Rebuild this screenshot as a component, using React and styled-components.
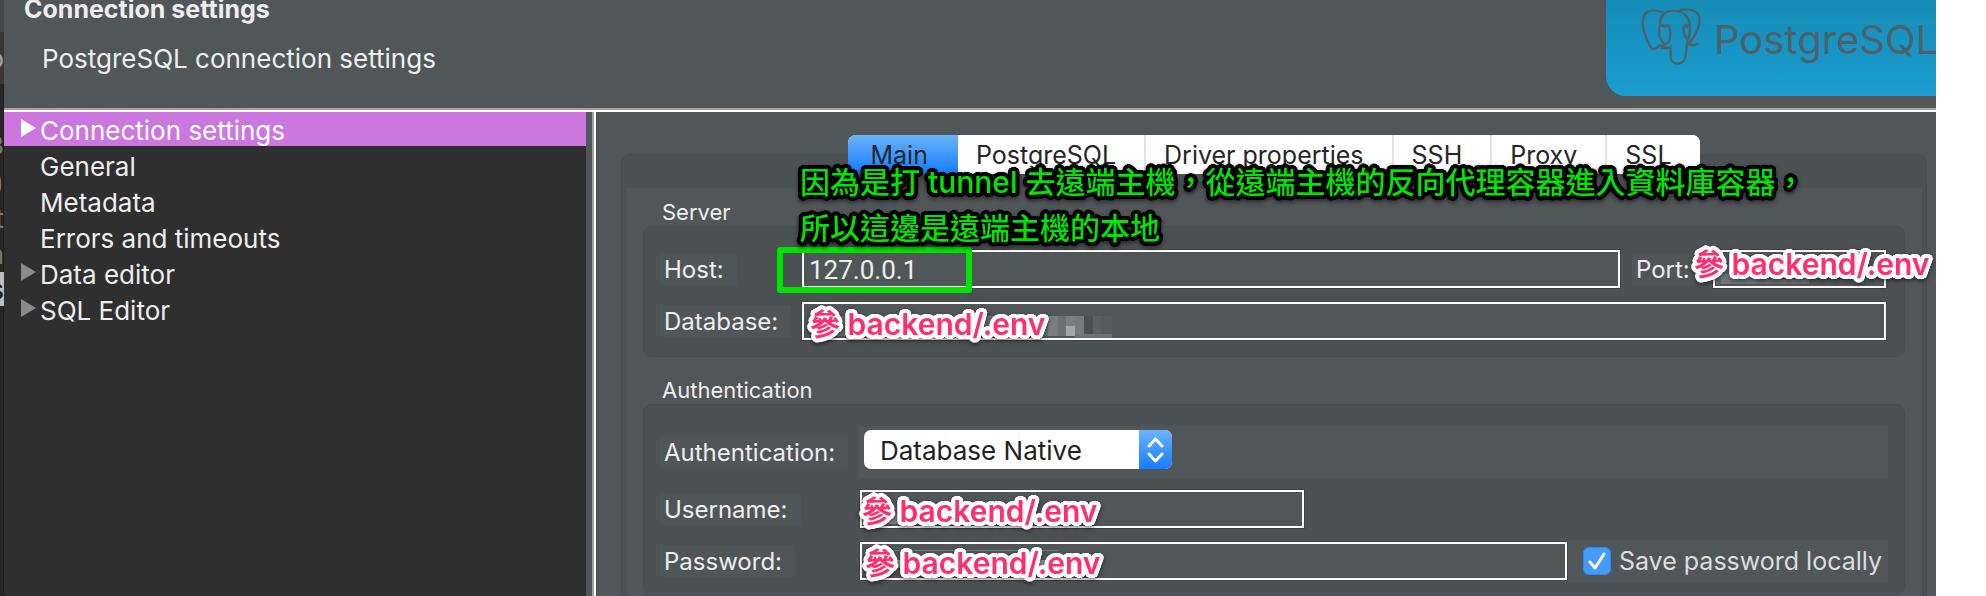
import React from 'react';
import styled, { createGlobalStyle, css } from 'styled-components';

const GlobalStyle = createGlobalStyle`
  *, *::before, *::after { box-sizing: border-box; }
  body { margin: 0; background: #fff; }
  button, input, select { font: inherit; color: inherit; margin: 0; }
`;

const Page = styled.div`
  display: flex;
  min-height: 100vh;
  padding-right: 50px;
  font-family: Inter, 'Noto Sans CJK TC', sans-serif;
  font-size: 26px;
  color: #eeeeee;
`;

/* Sliver of the window behind the dialog */
const Backdrop = styled.div`
  flex: 0 0 4px;
  width: 4px;
  background: #252525;
  box-shadow: inset -1px 0 0 #1c1c1c;
`;

const Sliver = styled.div`
  display: flex;
  align-items: center;
  justify-content: flex-end;
  height: ${p => p.$h}px;
  overflow: hidden;
  background: ${p => p.$bg || 'transparent'};
  color: ${p => p.$fg || '#777777'};
`;

const Dialog = styled.div`
  flex: 1;
  min-width: 0;
  display: flex;
  flex-direction: column;
  background: #515659;
`;

const Header = styled.header`
  display: flex;
  justify-content: space-between;
  height: 112px;
  border-bottom: 2px solid #ffffff;
  box-shadow: inset 0 -2px 0 #a3a3a1;
`;

const Heading = styled.div`
  padding-left: 20px;
`;

const Title = styled.h1`
  margin: 0 0 26px;
  font-size: 25px;
  line-height: 18px;
  font-weight: 700;
`;

const Subtitle = styled.p`
  margin: 0;
  padding-left: 18px;
  line-height: 30px;
`;

const Brand = styled.div`
  display: flex;
  width: 330px;
  height: 96px;
  overflow: hidden;
  border-bottom-left-radius: 20px;
  background: linear-gradient(#168cb6, #1a9dd1);
  color: #4c626b;
`;

const BrandMark = styled.svg`
  flex: none;
  width: 84px;
  height: 76px;
  margin-left: 24px;
  fill: none;
  stroke: currentColor;
  stroke-width: 7;
`;

const BrandName = styled.span`
  font-size: 40px;
  font-weight: 400;
  line-height: 80px;
`;

const Body = styled.div`
  flex: 1;
  display: flex;
`;

const Tree = styled.nav`
  flex: 0 0 582px;
  background: #2f2f2f;
`;

const TreeItem = styled.button`
  display: flex;
  width: 100%;
  height: 34px;
  margin-bottom: 2px;
  padding: 0 0 0 16px;
  border: 0;
  text-align: left;
  line-height: 38px;
  background: ${p => (p.$selected ? '#cb77df' : 'transparent')};
  color: ${p => (p.$selected ? '#ffffff' : '#eeeeee')};
`;

const Arrow = styled.svg`
  flex: none;
  width: 20px;
  height: 34px;
  fill: ${p => (p.$selected ? '#ffffff' : '#8b8b8b')};
`;

const Splitter = styled.div`
  flex: 0 0 10px;
  border-right: 2px solid #ffffff;
  box-shadow: inset -2px 0 0 #a0a0a0;
`;

const Pane = styled.main`
  flex: 1;
  min-width: 0;
  display: flex;
  flex-direction: column;
  padding: 23px 9px 0 25px;
`;

const TabBar = styled.div`
  z-index: 1;
  align-self: center;
  display: flex;
  height: 39px;
  margin-bottom: -20px;
  overflow: hidden;
  border-radius: 8px;
  background: #ffffff;
`;

const Tab = styled.button`
  padding: 0 28px 0 18px;
  border: 0;
  border-left: 2px solid #e3e3e3;
  font-size: 25px;
  color: #262626;
  background: #ffffff;
  ${p => p.$active && css`
    padding: 0 30px 0 22px;
    border-left: 0;
    background: linear-gradient(#6cb3fa, #147dff);
    & + button { border-left: 0; }
  `}
`;

const TabFrame = styled.div`
  flex: 1;
  padding: 33px 4px 0;
  border: 1px solid #494e51;
  border-bottom: 0;
  border-radius: 9px 9px 0 0;
  background: #4c5154;
`;

const TabPanel = styled.div`
  height: 100%;
  padding: 12px 17px 1px;
  background: #515659;
`;

const Group = styled.section`
  & + & { margin-top: 21px; }
`;

const GroupTitle = styled.h2`
  margin: 0 0 2px 19px;
  font-size: 22px;
  line-height: 24px;
  font-weight: 400;
`;

const GroupBox = styled.div`
  display: flex;
  flex-direction: column;
  gap: ${p => p.$gap}px;
  padding: ${p => p.$pad};
  border: 1px solid #484d50;
  border-radius: 9px;
  background: #4c5154;
`;

const Row = styled.div`
  display: flex;
  align-items: center;
`;

const LabelCell = styled.div`
  flex: 0 0 ${p => p.$w}px;
  padding-left: ${p => p.$inset || 0}px;
`;

const Label = styled.label`
  display: inline-block;
  padding: 2px 13px 0 4px;
  font-size: 24px;
  line-height: 30px;
  vertical-align: top;
  background: #505558;
`;

const Field = styled.div`
  position: relative;
  display: flex;
  padding: 1px;
  ${p => (p.$w ? `flex: 0 0 ${p.$w}px;` : 'flex: 1;')}
  min-width: 0;
  background: #3d4245;
`;

const TextInput = styled.input`
  width: 100%;
  height: 38px;
  padding: 2px 5px 0;
  border: 2px solid #ffffff;
  border-radius: 0;
  outline: 0;
  background: #515659;
  font-family: Roboto, sans-serif;
  font-weight: 400;
`;

const Strip = styled.div`
  flex: 1;
  display: flex;
  align-items: center;
  padding: ${p => p.$pad};
  background: #515659;
`;

const SelectWrap = styled.div`
  position: relative;
  width: 308px;
  height: 39px;
`;

const Select = styled.select`
  appearance: none;
  width: 100%;
  height: 100%;
  padding: 2px 40px 0 16px;
  border: 0;
  border-radius: 7px;
  background: #ffffff;
  color: #222222;
`;

const SelectCap = styled.svg`
  position: absolute;
  top: 0;
  right: 0;
  width: 33px;
  height: 39px;
  border-radius: 0 7px 7px 0;
  background: linear-gradient(#6cb3fa, #147dff);
  pointer-events: none;
`;

const Check = styled.label`
  display: flex;
  align-items: center;
  gap: 8px;
  padding: 0 6px 0 15px;
  font-size: 25px;
  line-height: 40px;
  white-space: nowrap;
  color: #dddddd;
`;

const CheckBox = styled.span`
  position: relative;
  display: flex;
  width: 28px;
  height: 28px;

  input {
    appearance: none;
    width: 28px;
    height: 28px;
    border: 1px solid #2f8af0;
    border-radius: 6px;
    background: #419cfb;
  }

  svg {
    position: absolute;
    inset: 0;
    pointer-events: none;
  }
`;

/* Round outline: copies of the text set in a circle round it */
const outline = (radius, color) =>
  Array.from({ length: 24 }, (_, i) => {
    const a = (i * Math.PI) / 12;
    return `${(Math.cos(a) * radius).toFixed(2)}px ${(Math.sin(a) * radius).toFixed(2)}px 0 ${color}`;
  }).join(', ');

/* Annotations drawn over the dialog */
const Note = styled.span`
  position: absolute;
  z-index: 3;
  top: ${p => p.$top}px;
  left: ${p => p.$left}px;
  font-size: 30px;
  font-weight: 600;
  line-height: 40px;
  white-space: nowrap;
  color: #ff2e6c;
  text-shadow: ${outline(4, '#ffffff')};
  filter: drop-shadow(0 2px 2px rgba(0, 0, 0, 0.5));
`;

const Remark = styled(Note)`
  font-weight: 500;
  line-height: 46px;
  color: #00e600;
  text-shadow: ${outline(4, '#000000')};
`;

const Highlight = styled.span`
  position: absolute;
  z-index: 2;
  top: -2px;
  left: -24px;
  width: 195px;
  height: 46px;
  border: 6px solid #00e400;
  border-radius: 3px;
  pointer-events: none;
`;

const Mosaic = styled.svg`
  position: absolute;
  top: 3px;
  left: 3px;
  width: 320px;
  height: 36px;
  pointer-events: none;
`;

const slivers = [
  { h: 32, bg: '#43484b' },
  { h: 52, bg: '#373737', t: 'o', fg: '#a5a5a5' },
  { h: 42 },
  { h: 38, t: '3' },
  { h: 36, t: ')' },
  { h: 36, t: 't' },
  { h: 36, t: 'a' },
  { h: 34, bg: '#bdbdbd', t: 's', fg: '#111111' },
];

const treeItems = [
  { text: 'Connection settings', arrow: true, selected: true },
  { text: 'General' },
  { text: 'Metadata' },
  { text: 'Errors and timeouts' },
  { text: 'Data editor', arrow: true },
  { text: 'SQL Editor', arrow: true },
];

const tabs = ['Main', 'PostgreSQL', 'Driver properties', 'SSH', 'Proxy', 'SSL'];

/* Pixelated patches: x, y, width, height, fill */
const patches = {
  database: [
    [10, 12, 236, 20, '#686d70'],
    [244, 12, 10, 20, '#7b7e81'],
    [254, 12, 8, 20, '#6d7174'],
    [262, 12, 9, 10, '#7b7e81'],
    [262, 22, 9, 10, '#a3a5a6'],
    [271, 12, 9, 20, '#787b7e'],
    [280, 12, 9, 20, '#4b4f52'],
    [289, 12, 8, 20, '#5c6063'],
    [297, 12, 11, 20, '#565b5e'],
    [271, 30, 37, 4, '#6e7275'],
  ],
  port: [
    [0, 12, 20, 20, '#63686b'],
    [6, 22, 36, 10, '#717578'],
    [42, 27, 52, 5, '#6a6e71'],
  ],
  username: [
    [22, 13, 22, 12, '#63686b'],
    [26, 22, 18, 10, '#85888a'],
  ],
  password: [
    [26, 6, 170, 1, '#72777a'],
    [30, 16, 26, 8, '#95989a'],
    [56, 12, 120, 14, '#63686b'],
    [176, 16, 10, 10, '#95989a'],
  ],
};

function Patch({ name }) {
  return (
    <Mosaic aria-hidden="true">
      {patches[name].map(([x, y, w, h, fill], i) => (
        <rect key={i} x={x} y={y} width={w} height={h} fill={fill} />
      ))}
    </Mosaic>
  );
}

export default function App() {
  return (
    <Page>
      <GlobalStyle />
      <Backdrop aria-hidden="true">
        {slivers.map((s, i) => (
          <Sliver key={i} $h={s.h} $bg={s.bg} $fg={s.fg}>{s.t}</Sliver>
        ))}
      </Backdrop>
      <Dialog>
        <Header>
          <Heading>
            <Title>Connection settings</Title>
            <Subtitle>PostgreSQL connection settings</Subtitle>
          </Heading>
          <Brand>
            <BrandMark viewBox="0 0 252 228" aria-hidden="true">
              <path d="M100 38C82 28 50 26 40 50C34 72 44 112 60 138C68 152 78 150 90 134" />
              <path d="M90 74C90 44 108 32 134 32C160 34 178 50 180 80C182 102 176 112 172 126" />
              <path d="M142 34C164 24 196 26 206 46C214 68 200 104 178 130" />
              <path d="M90 74C84 96 86 114 100 130C110 134 120 128 120 112C122 96 120 84 116 76L92 76" />
              <path d="M178 76L164 76C156 88 162 104 172 120" />
              <path d="M92 142C104 146 114 146 122 140V170C122 198 164 198 166 170L172 128C182 138 194 138 206 130" />
              <path d="M90 136L108 138M98 78L110 82M166 78L174 82" />
            </BrandMark>
            <BrandName>PostgreSQL</BrandName>
          </Brand>
        </Header>
        <Body>
          <Tree aria-label="Settings pages">
            {treeItems.map(item => (
              <TreeItem key={item.text} type="button" $selected={item.selected}>
                <Arrow viewBox="0 0 20 34" $selected={item.selected} aria-hidden="true">
                  {item.arrow && <path d="M1 7L16 16L1 25Z" />}
                </Arrow>
                {item.text}
              </TreeItem>
            ))}
          </Tree>
          <Splitter />
          <Pane>
            <TabBar role="tablist">
              {tabs.map((t, i) => (
                <Tab key={t} type="button" role="tab" aria-selected={i === 0} $active={i === 0}>{t}</Tab>
              ))}
            </TabBar>
            <TabFrame>
              <TabPanel>
                <Group>
                  <GroupTitle>Server</GroupTitle>
                  <GroupBox $gap={12} $pad="22px 17px 15px 16px">
                    <Row>
                      <LabelCell $w={141}><Label htmlFor="host">Host:</Label></LabelCell>
                      <Field>
                        <TextInput id="host" defaultValue="127.0.0.1" />
                        <Highlight />
                        <Remark $top={-90} $left={-1}>
                          因為是打 tunnel 去遠端主機，從遠端主機的反向代理容器進入資料庫容器，
                          <br />
                          所以這邊是遠端主機的本地
                        </Remark>
                      </Field>
                      <LabelCell $w={91} $inset={11}><Label htmlFor="port">Port:</Label></LabelCell>
                      <Field $w={175}>
                        <TextInput id="port" />
                        <Patch name="port" />
                        <Note $top={-5} $left={-18}>參 backend/.env</Note>
                      </Field>
                    </Row>
                    <Row>
                      <LabelCell $w={141}><Label htmlFor="database">Database:</Label></LabelCell>
                      <Field>
                        <TextInput id="database" />
                        <Patch name="database" />
                        <Note $top={3} $left={9}>參 backend/.env</Note>
                      </Field>
                    </Row>
                  </GroupBox>
                </Group>
                <Group>
                  <GroupTitle>Authentication</GroupTitle>
                  <GroupBox $gap={11} $pad="21px 16px 12px">
                    <Row>
                      <LabelCell $w={198}><Label htmlFor="auth">Authentication:</Label></LabelCell>
                      <Strip $pad="4px 6px 9px">
                        <SelectWrap>
                          <Select id="auth" defaultValue="native">
                            <option value="native">Database Native</option>
                          </Select>
                          <SelectCap viewBox="0 0 33 39" fill="none" stroke="#fff" strokeWidth="3" strokeLinecap="round" strokeLinejoin="round" aria-hidden="true">
                            <path d="M10 16L16.500 9L23 16M10 24L16.500 31L23 24" />
                          </SelectCap>
                        </SelectWrap>
                      </Strip>
                    </Row>
                    <Row>
                      <LabelCell $w={199}><Label htmlFor="username">Username:</Label></LabelCell>
                      <Field $w={446}>
                        <TextInput id="username" />
                        <Patch name="username" />
                        <Note $top={2} $left={3}>參 backend/.env</Note>
                      </Field>
                    </Row>
                    <Row>
                      <LabelCell $w={199}><Label htmlFor="password">Password:</Label></LabelCell>
                      <Strip $pad="1px 0">
                        <Field>
                          <TextInput id="password" type="password" />
                          <Patch name="password" />
                          <Note $top={2} $left={6}>參 backend/.env</Note>
                        </Field>
                        <Check>
                          <CheckBox>
                            <input type="checkbox" defaultChecked />
                            <svg viewBox="0 0 28 28" fill="none" stroke="#fff" strokeWidth="3" strokeLinecap="round" strokeLinejoin="round" aria-hidden="true">
                              <path d="M7 15L12 21L21 7" />
                            </svg>
                          </CheckBox>
                          Save password locally
                        </Check>
                      </Strip>
                    </Row>
                  </GroupBox>
                </Group>
              </TabPanel>
            </TabFrame>
          </Pane>
        </Body>
      </Dialog>
    </Page>
  );
}
